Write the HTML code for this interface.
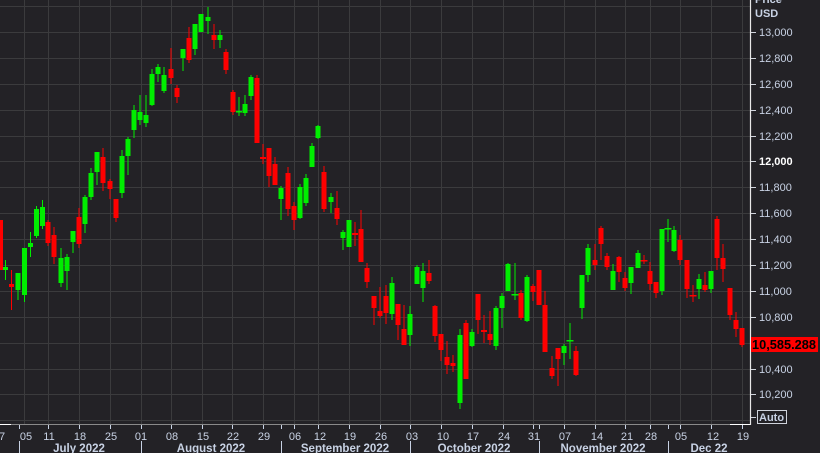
<!DOCTYPE html>
<html><head><meta charset="utf-8"><style>
html,body{margin:0;padding:0;background:#232226;}
svg{display:block}
text{font-family:"Liberation Sans",sans-serif;}
</style></head><body>
<svg width="820" height="453" viewBox="0 0 820 453" xmlns="http://www.w3.org/2000/svg">
<rect x="0" y="0" width="820" height="453" fill="#232226"/>
<g stroke="#3b3b3d" stroke-width="1">
<line x1="0" y1="6.5" x2="750" y2="6.5"/>
<line x1="0" y1="32.5" x2="750" y2="32.5"/>
<line x1="0" y1="58.5" x2="750" y2="58.5"/>
<line x1="0" y1="84.5" x2="750" y2="84.5"/>
<line x1="0" y1="110.5" x2="750" y2="110.5"/>
<line x1="0" y1="136.5" x2="750" y2="136.5"/>
<line x1="0" y1="161.5" x2="750" y2="161.5"/>
<line x1="0" y1="187.5" x2="750" y2="187.5"/>
<line x1="0" y1="213.5" x2="750" y2="213.5"/>
<line x1="0" y1="239.5" x2="750" y2="239.5"/>
<line x1="0" y1="265.5" x2="750" y2="265.5"/>
<line x1="0" y1="291.5" x2="750" y2="291.5"/>
<line x1="0" y1="317.5" x2="750" y2="317.5"/>
<line x1="0" y1="343.5" x2="750" y2="343.5"/>
<line x1="0" y1="369.5" x2="750" y2="369.5"/>
<line x1="0" y1="394.5" x2="750" y2="394.5"/>
<line x1="0" y1="420.5" x2="750" y2="420.5"/>
<line x1="24.5" y1="0" x2="24.5" y2="424"/>
<line x1="48.5" y1="0" x2="48.5" y2="424"/>
<line x1="79.5" y1="0" x2="79.5" y2="424"/>
<line x1="110.5" y1="0" x2="110.5" y2="424"/>
<line x1="141.5" y1="0" x2="141.5" y2="424"/>
<line x1="171.5" y1="0" x2="171.5" y2="424"/>
<line x1="202.5" y1="0" x2="202.5" y2="424"/>
<line x1="232.5" y1="0" x2="232.5" y2="424"/>
<line x1="263.5" y1="0" x2="263.5" y2="424"/>
<line x1="294.5" y1="0" x2="294.5" y2="424"/>
<line x1="318.5" y1="0" x2="318.5" y2="424"/>
<line x1="349.5" y1="0" x2="349.5" y2="424"/>
<line x1="380.5" y1="0" x2="380.5" y2="424"/>
<line x1="410.5" y1="0" x2="410.5" y2="424"/>
<line x1="441.5" y1="0" x2="441.5" y2="424"/>
<line x1="472.5" y1="0" x2="472.5" y2="424"/>
<line x1="503.5" y1="0" x2="503.5" y2="424"/>
<line x1="533.5" y1="0" x2="533.5" y2="424"/>
<line x1="564.5" y1="0" x2="564.5" y2="424"/>
<line x1="595.5" y1="0" x2="595.5" y2="424"/>
<line x1="625.5" y1="0" x2="625.5" y2="424"/>
<line x1="650.5" y1="0" x2="650.5" y2="424"/>
<line x1="680.5" y1="0" x2="680.5" y2="424"/>
<line x1="711.5" y1="0" x2="711.5" y2="424"/>
<line x1="742.5" y1="0" x2="742.5" y2="424"/>
</g>
<g fill="#00ee00" stroke="#00ee00" stroke-width="1">
<line x1="5.5" y1="260" x2="5.5" y2="280"/><rect x="3" y="267" width="5" height="3" stroke="none"/>
<line x1="18" y1="273" x2="18" y2="300"/><rect x="15.5" y="273" width="5" height="17" stroke="none"/>
<line x1="24.5" y1="248" x2="24.5" y2="302"/><rect x="22" y="248" width="5" height="47" stroke="none"/>
<line x1="30.5" y1="232" x2="30.5" y2="257"/><rect x="28" y="243" width="5" height="4" stroke="none"/>
<line x1="36.5" y1="206" x2="36.5" y2="238"/><rect x="34" y="209" width="5" height="27" stroke="none"/>
<line x1="42.5" y1="200" x2="42.5" y2="229"/><rect x="40" y="207" width="5" height="19" stroke="none"/>
<line x1="61" y1="248" x2="61" y2="287"/><rect x="58.5" y="258" width="5" height="25" stroke="none"/>
<line x1="67" y1="254" x2="67" y2="290"/><rect x="64.5" y="257" width="5" height="14" stroke="none"/>
<line x1="73" y1="231" x2="73" y2="253"/><rect x="70.5" y="231" width="5" height="11" stroke="none"/>
<line x1="85" y1="195" x2="85" y2="233"/><rect x="82.5" y="197" width="5" height="27" stroke="none"/>
<line x1="91" y1="168" x2="91" y2="200"/><rect x="88.5" y="173" width="5" height="24" stroke="none"/>
<line x1="97" y1="152" x2="97" y2="185"/><rect x="94.5" y="152" width="5" height="20" stroke="none"/>
<line x1="122" y1="150" x2="122" y2="198"/><rect x="119.5" y="156" width="5" height="37" stroke="none"/>
<line x1="128" y1="137" x2="128" y2="175"/><rect x="125.5" y="139" width="5" height="17" stroke="none"/>
<line x1="134" y1="105" x2="134" y2="138"/><rect x="131.5" y="110" width="5" height="20" stroke="none"/>
<line x1="140" y1="95" x2="140" y2="125"/><rect x="137.5" y="112" width="5" height="8" stroke="none"/>
<line x1="146" y1="95" x2="146" y2="127"/><rect x="143.5" y="115" width="5" height="8" stroke="none"/>
<line x1="152" y1="69" x2="152" y2="106"/><rect x="149.5" y="74" width="5" height="31" stroke="none"/>
<line x1="158" y1="64" x2="158" y2="82"/><rect x="155.5" y="67" width="5" height="7" stroke="none"/>
<line x1="164" y1="67" x2="164" y2="93"/><rect x="161.5" y="75" width="5" height="16" stroke="none"/>
<line x1="183" y1="49" x2="183" y2="71"/><rect x="180.5" y="49" width="5" height="9" stroke="none"/>
<line x1="195" y1="24" x2="195" y2="55"/><rect x="192.5" y="24" width="5" height="25" stroke="none"/>
<line x1="201" y1="14" x2="201" y2="32"/><rect x="198.5" y="14" width="5" height="18" stroke="none"/>
<line x1="208" y1="7" x2="208" y2="34"/><rect x="205.5" y="17" width="5" height="4" stroke="none"/>
<line x1="220" y1="30" x2="220" y2="48"/><rect x="217.5" y="35" width="5" height="5" stroke="none"/>
<line x1="239" y1="97" x2="239" y2="116"/><rect x="236" y="111" width="6" height="1.5" stroke="none"/>
<line x1="245" y1="95" x2="245" y2="116"/><rect x="242.5" y="104" width="5" height="9" stroke="none"/>
<line x1="251" y1="75" x2="251" y2="100"/><rect x="248.5" y="77" width="5" height="19" stroke="none"/>
<line x1="281" y1="186" x2="281" y2="220"/><rect x="278.5" y="188" width="5" height="11" stroke="none"/>
<line x1="300" y1="184" x2="300" y2="219"/><rect x="297.5" y="187" width="5" height="31" stroke="none"/>
<line x1="306" y1="174" x2="306" y2="206"/><rect x="303.5" y="178" width="5" height="25" stroke="none"/>
<line x1="312" y1="143" x2="312" y2="167"/><rect x="309.5" y="146" width="5" height="21" stroke="none"/>
<line x1="318" y1="125" x2="318" y2="139"/><rect x="315.5" y="126" width="5" height="12" stroke="none"/>
<line x1="331" y1="193" x2="331" y2="213"/><rect x="328.5" y="197" width="5" height="5" stroke="none"/>
<line x1="343" y1="230" x2="343" y2="250"/><rect x="340.5" y="232" width="5" height="6" stroke="none"/>
<line x1="349" y1="220" x2="349" y2="247"/><rect x="346.5" y="220" width="5" height="27" stroke="none"/>
<line x1="392" y1="277" x2="392" y2="320"/><rect x="389.5" y="283" width="5" height="31" stroke="none"/>
<line x1="410" y1="306" x2="410" y2="346"/><rect x="407.5" y="314" width="5" height="21" stroke="none"/>
<line x1="417" y1="265" x2="417" y2="284"/><rect x="414.5" y="267" width="5" height="17" stroke="none"/>
<line x1="423" y1="263" x2="423" y2="302"/><rect x="420.5" y="271" width="5" height="17" stroke="none"/>
<line x1="460" y1="329" x2="460" y2="409"/><rect x="457.5" y="335" width="5" height="68" stroke="none"/>
<line x1="472" y1="329" x2="472" y2="347"/><rect x="469.5" y="332" width="5" height="14" stroke="none"/>
<line x1="496" y1="306" x2="496" y2="350"/><rect x="493.5" y="308" width="5" height="38" stroke="none"/>
<line x1="502" y1="293" x2="502" y2="328"/><rect x="499.5" y="296" width="5" height="12" stroke="none"/>
<line x1="508" y1="263" x2="508" y2="291"/><rect x="505.5" y="264" width="5" height="27" stroke="none"/>
<line x1="515" y1="263" x2="515" y2="300"/><rect x="511.5" y="294" width="7" height="1.5" stroke="none"/>
<line x1="527" y1="275" x2="527" y2="322"/><rect x="524.5" y="277" width="5" height="44" stroke="none"/>
<line x1="564" y1="344" x2="564" y2="365"/><rect x="561.5" y="346" width="5" height="7" stroke="none"/>
<line x1="570" y1="323" x2="570" y2="359"/><rect x="566.5" y="340" width="7" height="1.5" stroke="none"/>
<line x1="582" y1="275" x2="582" y2="319"/><rect x="579.5" y="275" width="5" height="33" stroke="none"/>
<line x1="588" y1="244" x2="588" y2="282"/><rect x="585.5" y="248" width="5" height="27" stroke="none"/>
<line x1="613" y1="264" x2="613" y2="290"/><rect x="610.5" y="271" width="5" height="19" stroke="none"/>
<line x1="631" y1="267" x2="631" y2="294"/><rect x="628.5" y="267" width="5" height="16" stroke="none"/>
<line x1="638" y1="250" x2="638" y2="268"/><rect x="635.5" y="253" width="5" height="15" stroke="none"/>
<line x1="662" y1="229" x2="662" y2="295"/><rect x="659.5" y="229" width="5" height="62" stroke="none"/>
<line x1="668" y1="219" x2="668" y2="242"/><rect x="664.5" y="228" width="7" height="1.5" stroke="none"/>
<line x1="674" y1="226" x2="674" y2="252"/><rect x="671.5" y="230" width="5" height="21" stroke="none"/>
<line x1="699" y1="274" x2="699" y2="299"/><rect x="696.5" y="279" width="5" height="10" stroke="none"/>
<line x1="711" y1="271" x2="711" y2="293"/><rect x="708.5" y="271" width="5" height="18" stroke="none"/>
</g>
<g fill="#ff0000" stroke="#ff0000" stroke-width="1">
<rect x="-2" y="220" width="5" height="50" stroke="none"/>
<line x1="11.5" y1="270" x2="11.5" y2="310"/><rect x="9" y="284" width="5" height="3" stroke="none"/>
<line x1="48" y1="220" x2="48" y2="246"/><rect x="45.5" y="222" width="5" height="21" stroke="none"/>
<line x1="54" y1="227" x2="54" y2="264"/><rect x="51.5" y="235" width="5" height="22" stroke="none"/>
<line x1="79" y1="208" x2="79" y2="248"/><rect x="76.5" y="217" width="5" height="27" stroke="none"/>
<line x1="103" y1="148" x2="103" y2="191"/><rect x="100.5" y="157" width="5" height="26" stroke="none"/>
<line x1="110" y1="179" x2="110" y2="199"/><rect x="107.5" y="181" width="5" height="8" stroke="none"/>
<line x1="116" y1="199" x2="116" y2="222"/><rect x="113.5" y="199" width="5" height="19" stroke="none"/>
<line x1="171" y1="48" x2="171" y2="84"/><rect x="168.5" y="69" width="5" height="9" stroke="none"/>
<line x1="177" y1="85" x2="177" y2="103"/><rect x="174.5" y="88" width="5" height="9" stroke="none"/>
<line x1="189" y1="27" x2="189" y2="63"/><rect x="186.5" y="38" width="5" height="22" stroke="none"/>
<line x1="214" y1="24" x2="214" y2="49"/><rect x="211.5" y="35" width="5" height="5" stroke="none"/>
<line x1="226" y1="49" x2="226" y2="74"/><rect x="223.5" y="52" width="5" height="18" stroke="none"/>
<line x1="233" y1="90" x2="233" y2="115"/><rect x="230.5" y="92" width="5" height="20" stroke="none"/>
<line x1="257" y1="75" x2="257" y2="143"/><rect x="254.5" y="78" width="5" height="65" stroke="none"/>
<line x1="263" y1="144" x2="263" y2="164"/><rect x="260" y="157" width="6" height="2" stroke="none"/>
<line x1="269" y1="148" x2="269" y2="187"/><rect x="266.5" y="148" width="5" height="28" stroke="none"/>
<line x1="275" y1="157" x2="275" y2="185"/><rect x="272.5" y="164" width="5" height="21" stroke="none"/>
<line x1="288" y1="167" x2="288" y2="216"/><rect x="285.5" y="173" width="5" height="36" stroke="none"/>
<line x1="294" y1="202" x2="294" y2="230"/><rect x="291.5" y="206" width="5" height="14" stroke="none"/>
<line x1="324" y1="166" x2="324" y2="212"/><rect x="321.5" y="172" width="5" height="37" stroke="none"/>
<line x1="337" y1="191" x2="337" y2="225"/><rect x="334.5" y="208" width="5" height="11" stroke="none"/>
<line x1="355" y1="222" x2="355" y2="246"/><rect x="352" y="233" width="6" height="2" stroke="none"/>
<line x1="361" y1="210" x2="361" y2="262"/><rect x="358.5" y="229" width="5" height="33" stroke="none"/>
<line x1="367" y1="263" x2="367" y2="288"/><rect x="364.5" y="268" width="5" height="14" stroke="none"/>
<line x1="374" y1="296" x2="374" y2="325"/><rect x="371.5" y="296" width="5" height="12" stroke="none"/>
<line x1="380" y1="287" x2="380" y2="318"/><rect x="377.5" y="311" width="5" height="5" stroke="none"/>
<line x1="386" y1="285" x2="386" y2="324"/><rect x="383.5" y="296" width="5" height="17" stroke="none"/>
<line x1="398" y1="304" x2="398" y2="340"/><rect x="395.5" y="304" width="5" height="21" stroke="none"/>
<line x1="404" y1="305" x2="404" y2="345"/><rect x="401.5" y="329" width="5" height="16" stroke="none"/>
<line x1="429" y1="260" x2="429" y2="284"/><rect x="426.5" y="273" width="5" height="8" stroke="none"/>
<line x1="435" y1="305" x2="435" y2="342"/><rect x="432.5" y="306" width="5" height="30" stroke="none"/>
<line x1="441" y1="334" x2="441" y2="361"/><rect x="438.5" y="334" width="5" height="16" stroke="none"/>
<line x1="447" y1="341" x2="447" y2="374"/><rect x="444.5" y="357" width="5" height="8" stroke="none"/>
<line x1="453" y1="355" x2="453" y2="372"/><rect x="450.5" y="363" width="5" height="3" stroke="none"/>
<line x1="466" y1="320" x2="466" y2="379"/><rect x="463.5" y="323" width="5" height="56" stroke="none"/>
<line x1="478" y1="294" x2="478" y2="334"/><rect x="475.5" y="294" width="5" height="26" stroke="none"/>
<line x1="484" y1="315" x2="484" y2="343"/><rect x="481" y="330" width="6" height="2" stroke="none"/>
<line x1="490" y1="311" x2="490" y2="345"/><rect x="487.5" y="334" width="5" height="6" stroke="none"/>
<line x1="521" y1="290" x2="521" y2="320"/><rect x="518.5" y="293" width="5" height="25" stroke="none"/>
<line x1="533" y1="284" x2="533" y2="301"/><rect x="530.5" y="286" width="5" height="6" stroke="none"/>
<line x1="539" y1="270" x2="539" y2="305"/><rect x="536.5" y="270" width="5" height="35" stroke="none"/>
<line x1="545" y1="291" x2="545" y2="352"/><rect x="542.5" y="305" width="5" height="47" stroke="none"/>
<line x1="552" y1="356" x2="552" y2="379"/><rect x="549.5" y="368" width="5" height="8" stroke="none"/>
<line x1="558" y1="348" x2="558" y2="386"/><rect x="555.5" y="348" width="5" height="11" stroke="none"/>
<line x1="576" y1="346" x2="576" y2="376"/><rect x="573.5" y="351" width="5" height="24" stroke="none"/>
<line x1="595" y1="244" x2="595" y2="270"/><rect x="592.5" y="260" width="5" height="5" stroke="none"/>
<line x1="601" y1="226" x2="601" y2="260"/><rect x="598.5" y="228" width="5" height="16" stroke="none"/>
<line x1="607" y1="253" x2="607" y2="270"/><rect x="604.5" y="256" width="5" height="11" stroke="none"/>
<line x1="619" y1="256" x2="619" y2="282"/><rect x="616.5" y="257" width="5" height="15" stroke="none"/>
<line x1="625" y1="272" x2="625" y2="291"/><rect x="622.5" y="278" width="5" height="10" stroke="none"/>
<line x1="644" y1="255" x2="644" y2="264"/><rect x="640.5" y="260" width="7" height="1.5" stroke="none"/>
<line x1="650" y1="262" x2="650" y2="290"/><rect x="647.5" y="271" width="5" height="13" stroke="none"/>
<line x1="656" y1="282" x2="656" y2="298"/><rect x="653.5" y="282" width="5" height="11" stroke="none"/>
<line x1="680" y1="235" x2="680" y2="265"/><rect x="677.5" y="240" width="5" height="20" stroke="none"/>
<line x1="687" y1="260" x2="687" y2="298"/><rect x="684.5" y="260" width="5" height="29" stroke="none"/>
<line x1="693" y1="285" x2="693" y2="302"/><rect x="689.5" y="295" width="7" height="1.5" stroke="none"/>
<line x1="705" y1="272" x2="705" y2="292"/><rect x="702.5" y="285" width="5" height="5" stroke="none"/>
<line x1="717" y1="216" x2="717" y2="270"/><rect x="714.5" y="219" width="5" height="39" stroke="none"/>
<line x1="723" y1="244" x2="723" y2="282"/><rect x="720.5" y="258" width="5" height="11" stroke="none"/>
<line x1="730" y1="288" x2="730" y2="320"/><rect x="727.5" y="288" width="5" height="27" stroke="none"/>
<line x1="736" y1="312" x2="736" y2="337"/><rect x="733.5" y="320" width="5" height="9" stroke="none"/>
<line x1="742" y1="328" x2="742" y2="347"/><rect x="739.5" y="328" width="5" height="17" stroke="none"/>
</g>
<line x1="750.5" y1="0" x2="750.5" y2="425" stroke="#e8e8e8" stroke-width="1.2"/>
<line x1="0" y1="424.5" x2="750" y2="424.5" stroke="#8a8a8a" stroke-width="1"/>
<line x1="0" y1="424.5" x2="11" y2="424.5" stroke="#ffffff" stroke-width="1"/>
<line x1="730" y1="424.5" x2="750" y2="424.5" stroke="#ffffff" stroke-width="1"/>
<g stroke="#d0d4dc" stroke-width="1">
<line x1="751" y1="32.5" x2="756" y2="32.5"/>
<line x1="751" y1="58.5" x2="756" y2="58.5"/>
<line x1="751" y1="84.5" x2="756" y2="84.5"/>
<line x1="751" y1="110.5" x2="756" y2="110.5"/>
<line x1="751" y1="136.5" x2="756" y2="136.5"/>
<line x1="751" y1="161.5" x2="756" y2="161.5"/>
<line x1="751" y1="187.5" x2="756" y2="187.5"/>
<line x1="751" y1="213.5" x2="756" y2="213.5"/>
<line x1="751" y1="239.5" x2="756" y2="239.5"/>
<line x1="751" y1="265.5" x2="756" y2="265.5"/>
<line x1="751" y1="291.5" x2="756" y2="291.5"/>
<line x1="751" y1="317.5" x2="756" y2="317.5"/>
<line x1="751" y1="369.5" x2="756" y2="369.5"/>
<line x1="751" y1="394.5" x2="756" y2="394.5"/>
<line x1="751" y1="417.5" x2="756" y2="417.5"/>
</g>
<g fill="#c8d2e4" font-size="11">
<text x="755" y="3" font-weight="bold">Price</text>
<text x="755" y="17" font-weight="bold">USD</text>
<text x="759" y="36">13,000</text>
<text x="759" y="62">12,800</text>
<text x="759" y="88">12,600</text>
<text x="759" y="114">12,400</text>
<text x="759" y="140">12,200</text>
<text x="759" y="165" font-weight="bold" fill="#ffffff">12,000</text>
<text x="759" y="191">11,800</text>
<text x="759" y="217">11,600</text>
<text x="759" y="243">11,400</text>
<text x="759" y="269">11,200</text>
<text x="759" y="295">11,000</text>
<text x="759" y="321">10,800</text>
<text x="759" y="373">10,400</text>
<text x="759" y="398">10,200</text>
</g>
<rect x="751" y="337" width="67" height="15" fill="#ff0000"/>
<text x="752" y="349" font-size="12.5" font-weight="bold" fill="#000" textLength="64" lengthAdjust="spacingAndGlyphs">10,585.288</text>
<rect x="757.5" y="410.5" width="29" height="13" fill="none" stroke="#d0d4dc" stroke-width="1"/>
<text x="759" y="421" font-size="11" font-weight="bold" fill="#c8d2e4">Auto</text>
<g stroke="#c8d2e4" stroke-width="1">
<line x1="19.5" y1="425" x2="19.5" y2="429"/>
<line x1="48.5" y1="425" x2="48.5" y2="429"/>
<line x1="79.5" y1="425" x2="79.5" y2="429"/>
<line x1="110.5" y1="425" x2="110.5" y2="429"/>
<line x1="141.5" y1="425" x2="141.5" y2="429"/>
<line x1="171.5" y1="425" x2="171.5" y2="429"/>
<line x1="202.5" y1="425" x2="202.5" y2="429"/>
<line x1="232.5" y1="425" x2="232.5" y2="429"/>
<line x1="263.5" y1="425" x2="263.5" y2="429"/>
<line x1="281.5" y1="425" x2="281.5" y2="429"/>
<line x1="294.5" y1="425" x2="294.5" y2="429"/>
<line x1="318.5" y1="425" x2="318.5" y2="429"/>
<line x1="349.5" y1="425" x2="349.5" y2="429"/>
<line x1="380.5" y1="425" x2="380.5" y2="429"/>
<line x1="410.5" y1="425" x2="410.5" y2="429"/>
<line x1="441.5" y1="425" x2="441.5" y2="429"/>
<line x1="472.5" y1="425" x2="472.5" y2="429"/>
<line x1="503.5" y1="425" x2="503.5" y2="429"/>
<line x1="533.5" y1="425" x2="533.5" y2="429"/>
<line x1="539.5" y1="425" x2="539.5" y2="429"/>
<line x1="564.5" y1="425" x2="564.5" y2="429"/>
<line x1="595.5" y1="425" x2="595.5" y2="429"/>
<line x1="625.5" y1="425" x2="625.5" y2="429"/>
<line x1="650.5" y1="425" x2="650.5" y2="429"/>
<line x1="668.5" y1="425" x2="668.5" y2="429"/>
<line x1="680.5" y1="425" x2="680.5" y2="429"/>
<line x1="711.5" y1="425" x2="711.5" y2="429"/>
<line x1="742.5" y1="425" x2="742.5" y2="429"/>
<line x1="19.5" y1="441" x2="19.5" y2="453"/>
<line x1="141.5" y1="441" x2="141.5" y2="453"/>
<line x1="281.5" y1="441" x2="281.5" y2="453"/>
<line x1="410.5" y1="441" x2="410.5" y2="453"/>
<line x1="539.5" y1="441" x2="539.5" y2="453"/>
<line x1="668.5" y1="441" x2="668.5" y2="453"/>
</g>
<g fill="#c8d2e4" font-size="11" text-anchor="middle">
<text x="2" y="440">7</text>
<text x="26" y="440">05</text>
<text x="49" y="440">11</text>
<text x="80" y="440">18</text>
<text x="111" y="440">25</text>
<text x="141" y="440">01</text>
<text x="172" y="440">08</text>
<text x="203" y="440">15</text>
<text x="233" y="440">22</text>
<text x="264" y="440">29</text>
<text x="295" y="440">06</text>
<text x="320" y="440">12</text>
<text x="350" y="440">19</text>
<text x="381" y="440">26</text>
<text x="412" y="440">03</text>
<text x="443" y="440">10</text>
<text x="473" y="440">17</text>
<text x="504" y="440">24</text>
<text x="534" y="440">31</text>
<text x="565" y="440">07</text>
<text x="597" y="440">14</text>
<text x="627" y="440">21</text>
<text x="651" y="440">28</text>
<text x="681" y="440">05</text>
<text x="713" y="440">12</text>
<text x="743" y="440">19</text>
</g>
<g fill="#c8d2e4" font-size="11.5" font-weight="bold" text-anchor="middle">
<text x="79" y="452">July 2022</text>
<text x="211" y="452">August 2022</text>
<text x="345" y="452">September 2022</text>
<text x="474" y="452">October 2022</text>
<text x="603" y="452">November 2022</text>
<text x="709" y="452">Dec 22</text>
</g>
</svg>
</body></html>
